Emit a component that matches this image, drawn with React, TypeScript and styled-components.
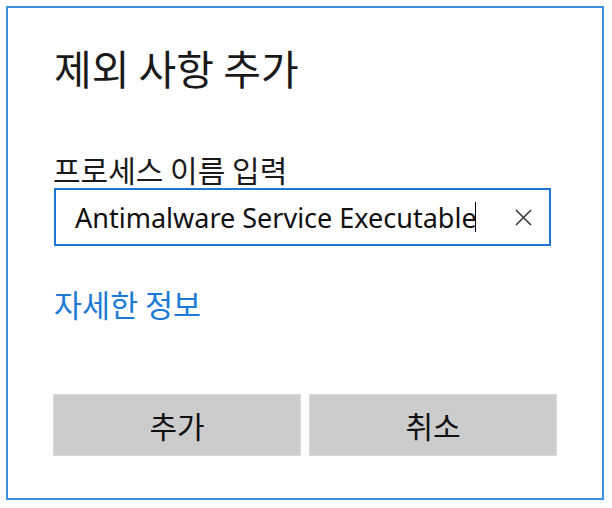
import React from "react";
import styled, { createGlobalStyle } from "styled-components";

const Global = createGlobalStyle`
  html, body { margin: 0; padding: 0; background: #ffffff; }
  body { font-family: "Noto Sans CJK KR", "Noto Sans", sans-serif; }
`;

const Dialog = styled.div`
  box-sizing: border-box;
  margin: 6px;
  width: 598px;
  height: 494px;
  border: 2px solid #3f92e2;
  background: #ffffff;
  padding: 35px 45px 0 45px;
  display: flex;
  flex-direction: column;
`;

const Title = styled.h1`
  margin: 0 0 0 1px;
  font-size: 41px;
  line-height: 48px;
  font-weight: 400;
  color: #1a1a1a;
  font-family: "Noto Sans CJK KR", sans-serif;
  white-space: nowrap;
`;

const Label = styled.div`
  margin: 61px 0 0 0;
  font-size: 30px;
  line-height: 34px;
  color: #1a1a1a;
  font-family: "Noto Sans CJK KR", sans-serif;
`;

const InputBox = styled.div`
  box-sizing: border-box;
  margin: 2px 6px 0 1px;
  height: 58px;
  border: 2px solid #1f76d6;
  display: flex;
  align-items: center;
  padding: 0 16px 0 19px;
`;

const InputText = styled.div`
  flex: 1;
  display: flex;
  align-items: center;
  font-family: "Noto Sans", "Open Sans", sans-serif;
  font-size: 27px;
  color: #111;
  white-space: nowrap;
`;

const Caret = styled.span`
  display: inline-block;
  width: 1.5px;
  height: 30px;
  background: #000;
  margin-left: -2px;
`;

const ClearButton = styled.div`
  width: 20px;
  height: 20px;
  display: flex;
  align-items: center;
  justify-content: center;
`;

const Link = styled.a`
  margin: 40px 0 0 1px;
  font-size: 30.5px;
  line-height: 36px;
  color: #1a7ad6;
  text-decoration: none;
  font-family: "Noto Sans CJK KR", sans-serif;
  align-self: flex-start;
`;

const ButtonRow = styled.div`
  margin-top: 72px;
  display: grid;
  grid-template-columns: 1fr 1fr;
  gap: 8px;
`;

const Button = styled.button`
  box-sizing: border-box;
  height: 62px;
  border: 1px solid #dadada;
  background: #cccccc;
  font-family: "Noto Sans CJK KR", sans-serif;
  font-size: 30px;
  color: #111;
  padding: 0;
`;

export default function App() {
  return (
    <>
      <Global />
      <Dialog>
        <Title>제외 사항 추가</Title>
        <Label>프로세스 이름 입력</Label>
        <InputBox>
          <InputText>
            Antimalware Service Executable
            <Caret />
          </InputText>
          <ClearButton>
            <svg width="17" height="17" viewBox="0 0 17 17">
              <path d="M1 1 L16 16 M16 1 L1 16" stroke="#333" strokeWidth="1.5" fill="none" />
            </svg>
          </ClearButton>
        </InputBox>
        <Link href="#">자세한 정보</Link>
        <ButtonRow>
          <Button>추가</Button>
          <Button>취소</Button>
        </ButtonRow>
      </Dialog>
    </>
  );
}
